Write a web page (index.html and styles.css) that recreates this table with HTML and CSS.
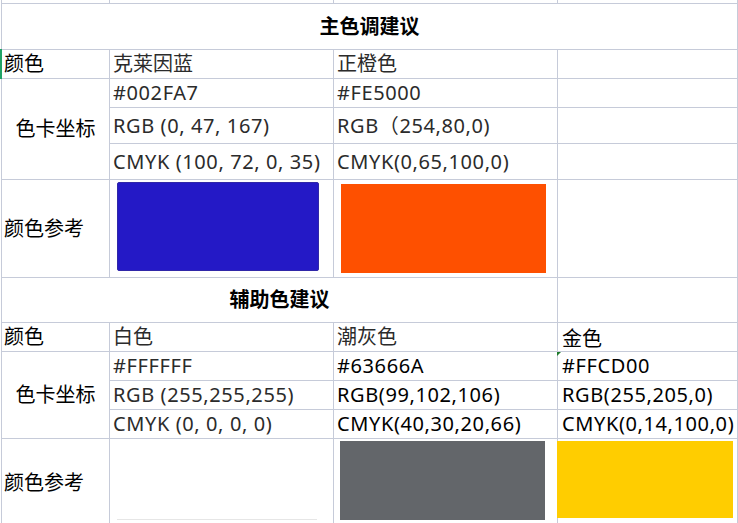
FILE: index.html
```html
<!DOCTYPE html>
<html lang="zh-CN">
<head>
<meta charset="utf-8">
<title>色彩建议</title>
<link rel="stylesheet" href="styles.css">
</head>
<body>
<div class="sheet">
  <div class="c"></div><div class="c"></div><div class="c"></div><div class="c"></div>

  <div class="c title span4">主色调建议</div>

  <div class="c label sel">颜色</div>
  <div class="c txt">克莱因蓝</div>
  <div class="c txt">正橙色</div>
  <div class="c"></div>

  <div class="c label center rows3">色卡坐标</div>
  <div class="c txt lat">#002FA7</div>
  <div class="c txt lat">#FE5000</div>
  <div class="c"></div>
  <div class="c txt lat">RGB (0, 47, 167)</div>
  <div class="c txt lat">RGB（254,80,0)</div>
  <div class="c"></div>
  <div class="c txt lat">CMYK (100, 72, 0, 35)</div>
  <div class="c txt lat">CMYK(0,65,100,0)</div>
  <div class="c"></div>

  <div class="c label">颜色参考</div>
  <div class="c sw-cell"><div class="sw sw-blue"></div></div>
  <div class="c sw-cell"><div class="sw sw-orange"></div></div>
  <div class="c"></div>

  <div class="c title span3">辅助色建议</div>
  <div class="c"></div>

  <div class="c label">颜色</div>
  <div class="c txt">白色</div>
  <div class="c txt">潮灰色</div>
  <div class="c txt dark c4 low">金色</div>

  <div class="c label center rows3">色卡坐标</div>
  <div class="c txt lat">#FFFFFF</div>
  <div class="c txt lat dark">#63666A</div>
  <div class="c txt lat dark c4 flag">#FFCD00</div>
  <div class="c txt lat">RGB (255,255,255)</div>
  <div class="c txt lat dark">RGB(99,102,106)</div>
  <div class="c txt lat dark c4">RGB(255,205,0)</div>
  <div class="c txt lat">CMYK (0, 0, 0, 0)</div>
  <div class="c txt lat dark">CMYK(40,30,20,66)</div>
  <div class="c txt lat dark c4">CMYK(0,14,100,0)</div>

  <div class="c label">颜色参考</div>
  <div class="c sw-cell"><div class="sw sw-white"></div></div>
  <div class="c sw-cell"><div class="sw sw-gray"></div></div>
  <div class="c sw-cell"><div class="sw sw-yellow"></div></div>
</div>
</body>
</html>
```

FILE: styles.css
```css
html, body {
  margin: 0;
  padding: 0;
  background: #ffffff;
  overflow: hidden;
}

body {
  width: 738px;
  height: 523px;
  font-family: "Noto Sans", "Noto Sans CJK SC", sans-serif;
  font-size: 20px;
  color: #2b2b2b;
}

.sheet {
  display: grid;
  width: max-content;
  margin-left: 1px;
  grid-template-columns: 107px 223px 223px 179px;
  grid-template-rows: 3px 45px 28px 28px 35px 35px 97px 44px 28px 28px 28px 28px 87px;
  gap: 1px;
  padding: 0 1px 1px 1px;
  background: #c6cbd9;
}

.c {
  background: #ffffff;
  display: flex;
  align-items: center;
  padding-left: 3px;
  white-space: nowrap;
  line-height: 1;
  position: relative;
}

.lat { letter-spacing: 0.6px; }

.title {
  justify-content: center;
  font-weight: bold;
  color: #000000;
  padding-left: 0;
}

.span4 { grid-column: span 4; }
.span3 { grid-column: span 3; }
.rows3 { grid-row: span 3; }

.label {
  color: #000000;
  padding-left: 2px;
}

.center {
  justify-content: center;
  padding-left: 0;
}

.dark { color: #000000; }

.c4 { padding-left: 4px; }

.low { padding-top: 4px; }

.sel::before {
  content: "";
  position: absolute;
  left: -2px;
  top: -1px;
  width: 2px;
  height: 30px;
  background: #21a366;
}

.flag::before {
  content: "";
  position: absolute;
  left: -1px;
  top: 0;
  width: 0;
  height: 0;
  border-top: 4px solid #1d7a2a;
  border-right: 4px solid transparent;
}

.sw-cell {
  align-items: flex-start;
  padding-left: 0;
}

.sw { flex: none; }

.sw-blue {
  width: 200px;
  height: 87px;
  margin: 2px 0 0 7px;
  background: #2419c6;
  border: 1px solid #3027a8;
  border-radius: 2px;
}

.sw-orange {
  width: 205px;
  height: 89px;
  margin: 4px 0 0 7px;
  background: #fe5000;
}

.sw-white {
  width: 200px;
  height: 78px;
  margin: 2px 0 0 7px;
  background: #ffffff;
  border-bottom: 1px solid #e6e6e6;
}

.sw-gray {
  width: 205px;
  height: 79px;
  margin: 2px 0 0 6px;
  background: #63666a;
}

.sw-yellow {
  width: 176px;
  height: 77px;
  margin: 2px 0 0 -1px;
  background: #ffcd00;
}
```
